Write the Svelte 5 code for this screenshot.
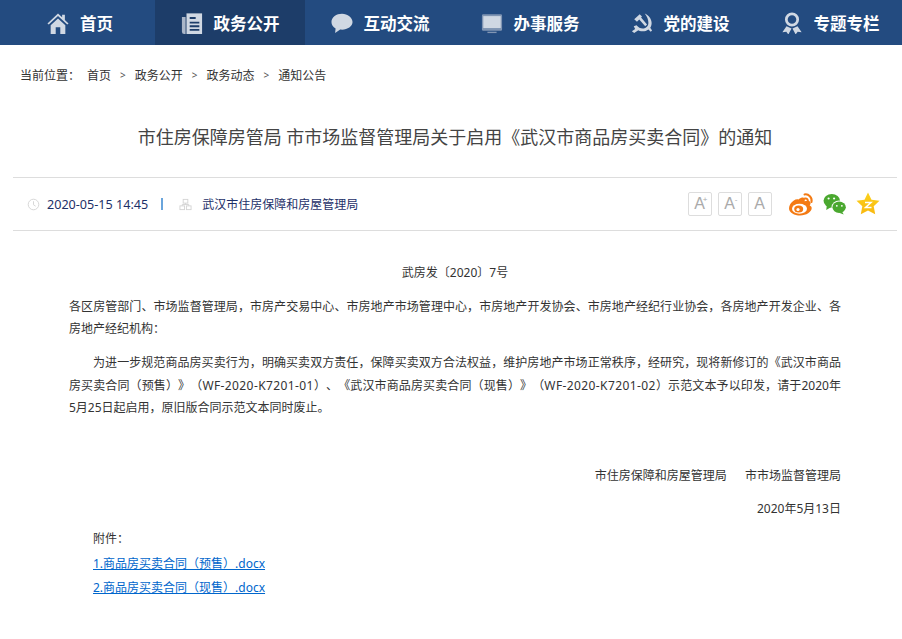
<script lang="ts">
	const navItems = [
		{ label: '首页', icon: 'home' },
		{ label: '政务公开', icon: 'news', active: true },
		{ label: '互动交流', icon: 'chat' },
		{ label: '办事服务', icon: 'screen' },
		{ label: '党的建设', icon: 'party' },
		{ label: '专题专栏', icon: 'ribbon' }
	];
	const crumbs = ['首页', '政务公开', '政务动态', '通知公告'];
</script>

<nav class="nav">
	{#each navItems as item}
		<a class="nav-item" class:active={item.active} href="#top">
			<svg class="nav-icon" viewBox="0 0 24 24" fill="#d0d8e3">
				{#if item.icon === 'home'}
					<path d="M12 1.500 .5 12.500l1.400 1.200L12 4.400l10.100 9.300 1.400-1.200-4-3.900V3h-3v2.600z" />
					<path d="M4 14.500 12 7l8 7.500V24h-5.500v-7.500h-5V24H4z" />
				{:else if item.icon === 'news'}
					<path fill="#aab6c8" d="M1 5.500h4V24H3.500A2.500 2.500 0 0 1 1 21.500z" />
					<path d="M6 1.500h17V24H6z" />
					<path fill="#1d3d69" d="M9.500 5.500h6.500v2H9.500zM9.500 10.500h10.500v2H9.500zM9.500 14.500h10.500v2H9.500zM9.500 18.500h10.500v2H9.500z" />
				{:else if item.icon === 'chat'}
					<path d="M12 2C5.900 2 .5 5.800.5 11c0 3 1.700 5.400 4.500 7L4.500 23l5.500-3.800c.7.100 1.300.1 2 .1 6.100 0 11.500-3.600 11.500-8.300S18.100 2 12 2z" />
				{:else if item.icon === 'screen'}
					<path fill="#8095b3" d="M2.500 2.500h19A1.500 1.500 0 0 1 23 4v15a1.500 1.500 0 0 1-1.500 1.500h-19A1.500 1.500 0 0 1 1 19V4a1.500 1.500 0 0 1 1.500-1.500z" />
					<path d="M2.500 4.500h19v13h-19z" />
					<path fill="#8095b3" d="M7 21.500h10V23H7z" />
				{:else if item.icon === 'party'}
					<path d="M9.500 2.500 3.500 8l3 2.500 2.500-2.300 6.500 7.300 2-2L11 6l1-1z" />
					<path d="M15 1.500c4.500 2 7.500 6 7.500 10.500 0 2-.5 3.800-1.500 5.300l2 3-1.500 1.200-2.500-2.500c-2 1.500-4.500 2.200-7 2-1.500 0-3-.5-4-1.200L3.500 23 1 21l3.500-2.500L3 15.500l3-1c2 2.500 5 4 8 3.500 3-.5 5-3 5-6 0-4-1.500-7.500-4-10.500z" />
				{:else}
					<path fill-rule="evenodd" d="M12 .5a7.700 7.700 0 1 1 0 15.400A7.700 7.700 0 0 1 12 .5zm0 3a4.700 4.700 0 1 0 0 9.400 4.700 4.700 0 0 0 0-9.400z" />
					<path d="M6 15.500 1.500 22l4.300-.5L8 24.500l3.500-6.500zM18 15.500l4.500 6.500-4.300-.5-2.200 3-3.500-6.500z" />
				{/if}
			</svg>
			<span>{item.label}</span>
		</a>
	{/each}
</nav>

<div class="crumbs">
	<span class="crumb-label">当前位置：</span>
	{#each crumbs as crumb, i}
		{#if i > 0}<span class="sep">&gt;</span>{/if}
		<a href="#top">{crumb}</a>
	{/each}
</div>

<main class="article">
	<h1>市住房保障房管局 市市场监督管理局关于启用《武汉市商品房买卖合同》的通知</h1>

	<div class="meta">
		<svg class="meta-icon" viewBox="0 0 14 14" fill="none" stroke="#d4d4d4" stroke-width="1">
			<circle cx="7" cy="7" r="5.700" />
			<path d="M7 3.500V7.300l2.300 1.500" />
		</svg>
		<span class="date">2020-05-15 14:45</span>
		<span class="bar"></span>
		<svg class="meta-icon org" viewBox="0 0 14 14" fill="none" stroke="#d4d4d4" stroke-width="1">
			<rect x="4.500" y="1.500" width="5" height="4" />
			<rect x="1" y="8.500" width="5" height="4" />
			<rect x="8" y="8.500" width="5" height="4" />
			<path d="M7 5.500v1.500M3.500 8.500V7h7v1.500" />
		</svg>
		<a class="source" href="#top">武汉市住房保障和房屋管理局</a>

		<div class="tools">
			<button class="size" type="button">A<sup>+</sup></button>
			<button class="size" type="button">A<sup>-</sup></button>
			<button class="size" type="button">A</button>
			<svg class="share weibo" viewBox="0 0 26 24">
				<path fill="#f47a13" d="M10.500 7.500c2.500-2 5-2.500 6-1.300.6.700.5 1.800 0 3 2.700-.9 5-.6 5.800.8.600 1 .3 2.300-.6 3.400 1.200.4 2 1.300 2 2.600 0 3.800-5.500 7.500-11.500 7.500C6.500 23.500 1 20.800 1 16.200c0-2.800 2-5.800 4.500-7.500 1.800-1.200 3.500-1.700 5-1.200z" />
				<ellipse cx="11.500" cy="16.800" rx="7.500" ry="5" fill="#fff" />
				<ellipse cx="10.700" cy="17" rx="4.500" ry="3.500" fill="#f47a13" />
				<circle cx="10" cy="17.500" r="1.600" fill="#fff" />
				<path fill="none" stroke="#f47a13" stroke-width="2" stroke-linecap="round" d="M16.500 2.500c4-.8 8 2.800 7 7.500M17 6.500c1.800-.3 3.200 1 2.800 3" />
			</svg>
			<svg class="share wechat" viewBox="0 0 26 24">
				<ellipse cx="9.500" cy="8.500" rx="9" ry="7.500" fill="#4aa82f" />
				<path fill="#4aa82f" d="M4 14l-.5 4.500 5-3z" />
				<ellipse cx="17.500" cy="15.500" rx="8.300" ry="7.200" fill="#fff" />
				<ellipse cx="17.500" cy="15.500" rx="7.300" ry="6.200" fill="#4aa82f" />
				<path fill="#4aa82f" d="M20.500 20l2 3.500-5-2z" />
				<circle cx="6" cy="6" r="1.200" fill="#fff" />
				<circle cx="12" cy="6" r="1.200" fill="#fff" />
				<circle cx="15" cy="14" r="1" fill="#fff" />
				<circle cx="20.500" cy="14" r="1" fill="#fff" />
			</svg>
			<svg class="share" viewBox="0 0 24 24">
				<defs>
					<linearGradient id="star" x1="0" y1="0" x2="0" y2="1">
						<stop offset="0" stop-color="#fbd21c" />
						<stop offset="1" stop-color="#f9b80f" />
					</linearGradient>
				</defs>
				<path fill="url(#star)" d="M12 .5l3.500 7.200 8 1.100-5.800 5.500 1.500 8-7.200-3.900-7.200 3.900 1.500-8L.5 8.800l8-1.100z" />
				<path fill="none" stroke="#fff" stroke-width="1.500" d="M9 10.500h6l-5.500 5h6" />
			</svg>
		</div>
	</div>

	<div class="body">
		<p class="center">武房发〔2020〕7号</p>
		<p>各区房管部门、市场监督管理局，市房产交易中心、市房地产市场管理中心，市房地产开发协会、市房地产经纪行业协会，各房地产开发企业、各房地产经纪机构：</p>
		<p class="indent">为进一步规范商品房买卖行为，明确买卖双方责任，保障买卖双方合法权益，维护房地产市场正常秩序，经研究，现将新修订的《武汉市商品房买卖合同（预售）》（<span class="code">WF-2020-K7201-01</span>）、《武汉市商品房买卖合同（现售）》（<span class="code">WF-2020-K7201-02</span>）示范文本予以印发，请于2020年5月25日起启用，原旧版合同示范文本同时废止。</p>
		<p class="blank">&nbsp;</p>
		<p class="right">市住房保障和房屋管理局　&nbsp;&nbsp;市市场监督管理局</p>
		<p class="right">2020年5月13日</p>
		<div class="files">
			<div>附件：</div>
			<a href="#top">1.商品房买卖合同（预售）.docx</a>
			<a href="#top">2.商品房买卖合同（现售）.docx</a>
		</div>
	</div>
</main>

<style>
	:global(body) {
		background: #fff;
		color: #333;
		font-family: 'Noto Sans', 'Noto Sans CJK SC', sans-serif;
		font-size: 12px;
		text-spacing-trim: space-all;
	}

	a {
		color: inherit;
		text-decoration: none;
	}

	.nav {
		display: flex;
		height: 45px;
		padding-left: 5px;
		background: #234b80;
		overflow: hidden;
	}

	.nav-item {
		display: flex;
		flex: 0 0 150px;
		align-items: center;
		justify-content: center;
		box-sizing: border-box;
		color: #fff;
		font-size: 16.500px;
		font-weight: 700;
	}

	.nav-item.active {
		background: #1d3d69;
	}

	.nav-icon {
		width: 22px;
		height: 22px;
		margin-right: 11px;
		flex: none;
	}

	.crumbs {
		display: flex;
		align-items: center;
		height: 22px;
		margin-top: 19px;
		padding-left: 20px;
		color: #333;
	}

	.crumb-label {
		margin-right: 7px;
	}

	.sep {
		margin: 0 9px;
		color: #555;
		font-size: 10px;
	}

	.article {
		margin: 0 5px 0 13px;
	}

	h1 {
		margin: 0;
		padding: 37px 0 26px;
		color: #444;
		font-size: 18px;
		font-weight: 400;
		line-height: 28px;
		text-align: center;
	}

	.meta {
		display: flex;
		align-items: center;
		height: 52px;
		padding-left: 14px;
		border-top: 1px solid #ddd;
		border-bottom: 1px solid #ddd;
		color: #1d3068;
	}

	.meta-icon {
		width: 13px;
		height: 13px;
		margin-right: 7px;
		flex: none;
	}

	.date {
		font-size: 12.600px;
	}

	.bar {
		width: 2px;
		height: 12px;
		margin: 0 16px 0 13px;
		background: #6aa5dc;
	}

	.org {
		margin-right: 10px;
	}

	.tools {
		display: flex;
		align-items: center;
		margin-left: auto;
		padding-right: 16px;
	}

	.size {
		position: relative;
		width: 24px;
		height: 24px;
		margin-right: 6px;
		padding: 0;
		border: 1px solid #ddd;
		border-radius: 2px;
		background: #fff;
		color: #aaa;
		font-family: 'Liberation Sans', sans-serif;
		font-size: 16px;
	}

	.size sup {
		position: absolute;
		top: 3px;
		right: 3px;
		font-size: 8px;
		line-height: 8px;
	}

	.share {
		width: 26px;
		height: 24px;
		margin-left: 8px;
	}

	.weibo {
		margin-left: 10px;
	}

	.wechat {
		width: 24px;
		height: 22px;
		margin-left: 9.500px;
	}

	.body {
		padding: 31px 56px 0;
		line-height: 22.5px;
	}

	.body p {
		margin: 0 0 11.300px;
		text-align: justify;
	}

	.code {
		letter-spacing: .4px;
	}

	.body .center {
		text-align: center;
	}

	.body .right {
		text-align: right;
	}

	.indent {
		text-indent: 24px;
	}

	.blank {
		height: 22.500px;
	}

	.files {
		display: flex;
		flex-direction: column;
		padding: 0 24px 0;
		margin-top: -5px;
		line-height: 24.500px;
	}

	.files a {
		align-self: flex-start;
		color: #0066cc;
		text-decoration: underline;
	}
</style>
